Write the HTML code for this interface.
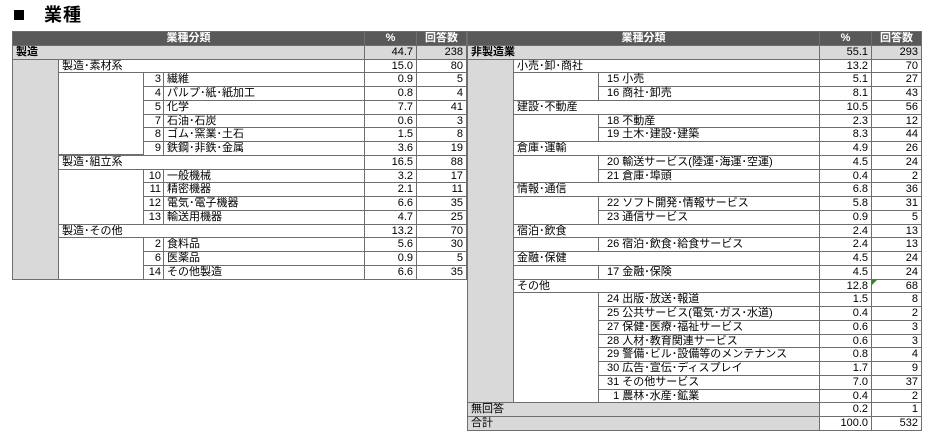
<!DOCTYPE html>
<html><head><meta charset="utf-8"><style>
body{margin:0;width:940px;height:442px;background:#fff;position:relative;overflow:hidden;font-family:"Liberation Sans","Noto Sans CJK JP",sans-serif;color:#000}
.t{position:absolute;left:14px;top:1px;font-size:18px;font-weight:bold;letter-spacing:1px}
.t b{display:inline-block;width:10px;height:10px;background:#000;margin-right:20px;vertical-align:1px}
.w{position:absolute;top:0;width:460px;height:442px}
.c{position:absolute;height:14.75px;border:1px solid #6e6e6e;box-sizing:border-box;font-size:11px;line-height:12px;padding:0 3px;white-space:nowrap;overflow:hidden;background:#fff}
.h{background:#595959;color:#fff;font-weight:bold;text-align:center}
.g{background:#d9d9d9}
.b{font-weight:bold}
.p{left:352px;width:53px;text-align:right}
.n{left:404px;width:51px;text-align:right}
.l1{left:0;width:353px}
.l2{left:46px;width:307px}
.num{left:131px;width:21px;text-align:right;padding:0 2px}
.nm{left:151px;width:202px}
.r3{left:131px;width:222px;padding-left:8px}
.box{position:absolute;border:1px solid #6e6e6e;box-sizing:border-box;background:#fff}
.gc{position:absolute;left:0;width:47px;background:#d9d9d9;border:1px solid #6e6e6e;box-sizing:border-box}
</style></head><body>
<div class="t"><b></b>業種</div>

<div class="w" style="left:12px">
<div class="gc" style="top:44.75px;height:234.75px"></div>
<div class="box" style="left:46px;width:307px;top:58.5px;height:96.25px"></div>
<div class="box" style="left:46px;width:307px;top:154.75px;height:69.75px"></div>
<div class="box" style="left:46px;width:307px;top:223.5px;height:56px"></div>
<div class="c h l1" style="top:31px">業種分類</div><div class="c h p" style="top:31px;text-align:center">%</div><div class="c h n" style="top:31px;text-align:center">回答数</div>
<div class="c g b l1" style="top:44.75px">製造</div><div class="c g p" style="top:44.75px">44.7</div><div class="c g n" style="top:44.75px">238</div>
<div class="c l2" style="top:58.5px">製造･素材系</div><div class="c p" style="top:58.5px">15.0</div><div class="c n" style="top:58.5px">80</div>
<div class="c num" style="top:72.25px">3</div><div class="c nm" style="top:72.25px">繊維</div><div class="c p" style="top:72.25px">0.9</div><div class="c n" style="top:72.25px">5</div>
<div class="c num" style="top:86px">4</div><div class="c nm" style="top:86px">パルプ･紙･紙加工</div><div class="c p" style="top:86px">0.8</div><div class="c n" style="top:86px">4</div>
<div class="c num" style="top:99.75px">5</div><div class="c nm" style="top:99.75px">化学</div><div class="c p" style="top:99.75px">7.7</div><div class="c n" style="top:99.75px">41</div>
<div class="c num" style="top:113.5px">7</div><div class="c nm" style="top:113.5px">石油･石炭</div><div class="c p" style="top:113.5px">0.6</div><div class="c n" style="top:113.5px">3</div>
<div class="c num" style="top:127.25px">8</div><div class="c nm" style="top:127.25px">ゴム･窯業･土石</div><div class="c p" style="top:127.25px">1.5</div><div class="c n" style="top:127.25px">8</div>
<div class="c num" style="top:141px">9</div><div class="c nm" style="top:141px">鉄鋼･非鉄･金属</div><div class="c p" style="top:141px">3.6</div><div class="c n" style="top:141px">19</div>
<div class="c l2" style="top:154.75px">製造･組立系</div><div class="c p" style="top:154.75px">16.5</div><div class="c n" style="top:154.75px">88</div>
<div class="c num" style="top:168.5px">10</div><div class="c nm" style="top:168.5px">一般機械</div><div class="c p" style="top:168.5px">3.2</div><div class="c n" style="top:168.5px">17</div>
<div class="c num" style="top:182.25px">11</div><div class="c nm" style="top:182.25px">精密機器</div><div class="c p" style="top:182.25px">2.1</div><div class="c n" style="top:182.25px">11</div>
<div class="c num" style="top:196px">12</div><div class="c nm" style="top:196px">電気･電子機器</div><div class="c p" style="top:196px">6.6</div><div class="c n" style="top:196px">35</div>
<div class="c num" style="top:209.75px">13</div><div class="c nm" style="top:209.75px">輸送用機器</div><div class="c p" style="top:209.75px">4.7</div><div class="c n" style="top:209.75px">25</div>
<div class="c l2" style="top:223.5px">製造･その他</div><div class="c p" style="top:223.5px">13.2</div><div class="c n" style="top:223.5px">70</div>
<div class="c num" style="top:237.25px">2</div><div class="c nm" style="top:237.25px">食料品</div><div class="c p" style="top:237.25px">5.6</div><div class="c n" style="top:237.25px">30</div>
<div class="c num" style="top:251px">6</div><div class="c nm" style="top:251px">医薬品</div><div class="c p" style="top:251px">0.9</div><div class="c n" style="top:251px">5</div>
<div class="c num" style="top:264.75px">14</div><div class="c nm" style="top:264.75px">その他製造</div><div class="c p" style="top:264.75px">6.6</div><div class="c n" style="top:264.75px">35</div>
</div>

<div class="w" style="left:467px">
<div class="gc" style="top:44.75px;height:358.5px"></div>
<div class="box" style="left:46px;width:307px;top:58.5px;height:42.25px"></div>
<div class="box" style="left:46px;width:307px;top:99.75px;height:42.25px"></div>
<div class="box" style="left:46px;width:307px;top:141px;height:42.25px"></div>
<div class="box" style="left:46px;width:307px;top:182.25px;height:42.25px"></div>
<div class="box" style="left:46px;width:307px;top:223.5px;height:28.5px"></div>
<div class="box" style="left:46px;width:307px;top:251px;height:28.5px"></div>
<div class="box" style="left:46px;width:307px;top:278.5px;height:124.75px"></div>
<div class="c h l1" style="top:31px">業種分類</div><div class="c h p" style="top:31px;text-align:center">%</div><div class="c h n" style="top:31px;text-align:center">回答数</div>
<div class="c g b l1" style="top:44.75px">非製造業</div><div class="c g p" style="top:44.75px">55.1</div><div class="c g n" style="top:44.75px">293</div>
<div class="c l2" style="top:58.5px">小売･卸･商社</div><div class="c p" style="top:58.5px">13.2</div><div class="c n" style="top:58.5px">70</div>
<div class="c r3" style="top:72.25px">15 小売</div><div class="c p" style="top:72.25px">5.1</div><div class="c n" style="top:72.25px">27</div>
<div class="c r3" style="top:86px">16 商社･卸売</div><div class="c p" style="top:86px">8.1</div><div class="c n" style="top:86px">43</div>
<div class="c l2" style="top:99.75px">建設･不動産</div><div class="c p" style="top:99.75px">10.5</div><div class="c n" style="top:99.75px">56</div>
<div class="c r3" style="top:113.5px">18 不動産</div><div class="c p" style="top:113.5px">2.3</div><div class="c n" style="top:113.5px">12</div>
<div class="c r3" style="top:127.25px">19 土木･建設･建築</div><div class="c p" style="top:127.25px">8.3</div><div class="c n" style="top:127.25px">44</div>
<div class="c l2" style="top:141px">倉庫･運輸</div><div class="c p" style="top:141px">4.9</div><div class="c n" style="top:141px">26</div>
<div class="c r3" style="top:154.75px">20 輸送サービス(陸運･海運･空運)</div><div class="c p" style="top:154.75px">4.5</div><div class="c n" style="top:154.75px">24</div>
<div class="c r3" style="top:168.5px">21 倉庫･埠頭</div><div class="c p" style="top:168.5px">0.4</div><div class="c n" style="top:168.5px">2</div>
<div class="c l2" style="top:182.25px">情報･通信</div><div class="c p" style="top:182.25px">6.8</div><div class="c n" style="top:182.25px">36</div>
<div class="c r3" style="top:196px">22 ソフト開発･情報サービス</div><div class="c p" style="top:196px">5.8</div><div class="c n" style="top:196px">31</div>
<div class="c r3" style="top:209.75px">23 通信サービス</div><div class="c p" style="top:209.75px">0.9</div><div class="c n" style="top:209.75px">5</div>
<div class="c l2" style="top:223.5px">宿泊･飲食</div><div class="c p" style="top:223.5px">2.4</div><div class="c n" style="top:223.5px">13</div>
<div class="c r3" style="top:237.25px">26 宿泊･飲食･給食サービス</div><div class="c p" style="top:237.25px">2.4</div><div class="c n" style="top:237.25px">13</div>
<div class="c l2" style="top:251px">金融･保健</div><div class="c p" style="top:251px">4.5</div><div class="c n" style="top:251px">24</div>
<div class="c r3" style="top:264.75px">17 金融･保険</div><div class="c p" style="top:264.75px">4.5</div><div class="c n" style="top:264.75px">24</div>
<div class="c l2" style="top:278.5px">その他</div><div class="c p" style="top:278.5px">12.8</div><div class="c n" style="top:278.5px">68<span style="position:absolute;left:0;top:0;width:0;height:0;border-top:5px solid #2a8a2a;border-right:5px solid transparent"></span></div>
<div class="c r3" style="top:292.25px">24 出版･放送･報道</div><div class="c p" style="top:292.25px">1.5</div><div class="c n" style="top:292.25px">8</div>
<div class="c r3" style="top:306px">25 公共サービス(電気･ガス･水道)</div><div class="c p" style="top:306px">0.4</div><div class="c n" style="top:306px">2</div>
<div class="c r3" style="top:319.75px">27 保健･医療･福祉サービス</div><div class="c p" style="top:319.75px">0.6</div><div class="c n" style="top:319.75px">3</div>
<div class="c r3" style="top:333.5px">28 人材･教育関連サービス</div><div class="c p" style="top:333.5px">0.6</div><div class="c n" style="top:333.5px">3</div>
<div class="c r3" style="top:347.25px">29 警備･ビル･設備等のメンテナンス</div><div class="c p" style="top:347.25px">0.8</div><div class="c n" style="top:347.25px">4</div>
<div class="c r3" style="top:361px">30 広告･宣伝･ディスプレイ</div><div class="c p" style="top:361px">1.7</div><div class="c n" style="top:361px">9</div>
<div class="c r3" style="top:374.75px">31 その他サービス</div><div class="c p" style="top:374.75px">7.0</div><div class="c n" style="top:374.75px">37</div>
<div class="c r3" style="top:388.5px">&nbsp;&nbsp;1 農林･水産･鉱業</div><div class="c p" style="top:388.5px">0.4</div><div class="c n" style="top:388.5px">2</div>
<div class="c g l1" style="top:402.25px">無回答</div><div class="c p" style="top:402.25px">0.2</div><div class="c n" style="top:402.25px">1</div>
<div class="c g l1" style="top:416px">合計</div><div class="c p" style="top:416px">100.0</div><div class="c n" style="top:416px">532</div>
</div>
</body></html>
